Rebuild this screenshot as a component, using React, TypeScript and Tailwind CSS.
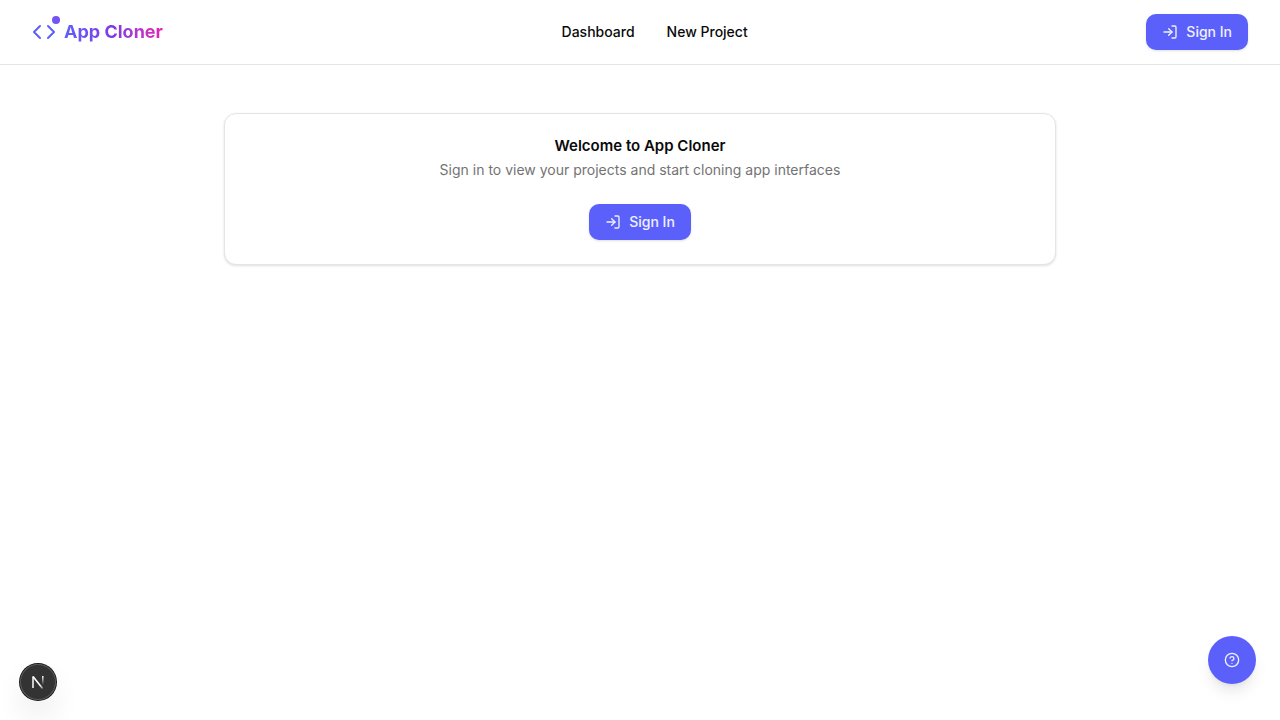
import { CircleHelp, Code, LogIn } from "lucide-react";

function SignInButton() {
  return (
    <button
      type="button"
      className="inline-flex h-9 items-center justify-center gap-2 rounded-[10px] bg-[#5c60fb] px-4 text-sm font-medium text-indigo-50 shadow-sm"
    >
      <LogIn className="size-4" />
      Sign In
    </button>
  );
}

function FrameworkMark() {
  return (
    <svg viewBox="0 0 36 36" className="size-9" fill="none" aria-hidden="true">
      <defs>
        <linearGradient id="mark-diagonal" x1="18" y1="18" x2="24" y2="25" gradientUnits="userSpaceOnUse">
          <stop offset="0.4" stopColor="#fff" />
          <stop offset="1" stopColor="#fff" stopOpacity="0.2" />
        </linearGradient>
        <linearGradient id="mark-stem" x1="23" y1="12" x2="23" y2="21" gradientUnits="userSpaceOnUse">
          <stop stopColor="#fff" />
          <stop offset="1" stopColor="#fff" stopOpacity="0" />
        </linearGradient>
      </defs>
      <path d="M13 24V12.5" stroke="#fff" strokeWidth="1.5" />
      <path d="M13 12.5L22.6 24.4" stroke="url(#mark-diagonal)" strokeWidth="1.6" />
      <path d="M22.8 12V21" stroke="url(#mark-stem)" strokeWidth="1.5" />
    </svg>
  );
}

function Header() {
  return (
    <header className="border-b border-neutral-200 bg-white">
      <div className="flex h-16 items-center justify-between px-8">
        <a href="#home" className="flex items-center gap-2">
          <span className="relative">
            <Code className="size-6 text-[#5c60fb]" />
            <span className="absolute -top-1 -right-1 size-2 rounded-full bg-linear-to-r from-[#6a5af5] to-[#7c4cf0]" />
          </span>
          <span className="bg-linear-to-r from-[#5c60fb] via-[#8038e4] to-[#e41bb4] bg-clip-text text-lg font-bold text-transparent">
            App Cloner
          </span>
        </a>
        <nav className="flex items-center gap-8 text-sm font-medium">
          <a href="#dashboard">Dashboard</a>
          <a href="#new">New Project</a>
        </nav>
        <SignInButton />
      </div>
    </header>
  );
}

export default function App() {
  return (
    <div className="min-h-screen bg-white font-['Inter',sans-serif] text-neutral-950 antialiased">
      <Header />
      <main className="mx-auto max-w-4xl px-8 py-12">
        <section className="flex flex-col items-center gap-6 rounded-xl border border-neutral-200 bg-white p-6 shadow-sm">
          <div className="flex flex-col items-center gap-1.5 text-center">
            <h1 className="text-[15px] leading-4 font-semibold">Welcome to App Cloner</h1>
            <p className="text-sm text-neutral-500">
              Sign in to view your projects and start cloning app interfaces
            </p>
          </div>
          <SignInButton />
        </section>
      </main>
      <button
        type="button"
        aria-label="Developer tools"
        className="fixed bottom-5 left-5 flex size-9 items-center justify-center rounded-full bg-[#333] shadow-[0_0_0_1px_#171717,inset_0_0_0_1px_#5a5a5a,0_16px_32px_-8px_rgba(0,0,0,0.24)]"
      >
        <FrameworkMark />
      </button>
      <button
        type="button"
        aria-label="Help"
        className="fixed right-6 bottom-9 flex size-12 items-center justify-center rounded-full bg-[#5c60fb] text-indigo-50 shadow-lg"
      >
        <CircleHelp className="size-4" />
      </button>
    </div>
  );
}
